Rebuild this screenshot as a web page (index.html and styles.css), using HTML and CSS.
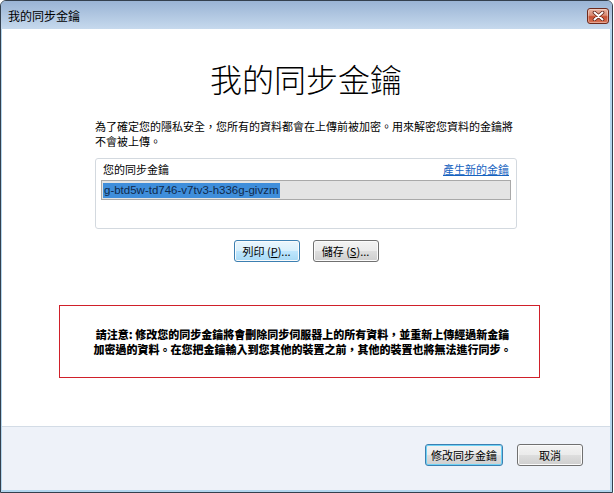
FILE: index.html
```html
<!DOCTYPE html>
<html lang="zh-Hant">
<head>
<meta charset="utf-8">
<title>我的同步金鑰</title>
<link rel="stylesheet" href="styles.css">
</head>
<body>
<div class="window">
  <div class="titlebar">
    <span class="title">我的同步金鑰</span>
    <button class="close" aria-label="關閉"><svg width="13" height="10" viewBox="0 0 13 10"><path d="M2.5 1.5 L10.5 8.5 M10.5 1.5 L2.5 8.5" stroke="#5e2014" stroke-width="3.6" stroke-linecap="round"/><path d="M2.5 1.5 L10.5 8.5 M10.5 1.5 L2.5 8.5" stroke="#fff" stroke-width="2" stroke-linecap="round"/></svg></button>
  </div>
  <div class="client">
    <main class="content">
      <h1 class="heading">我的同步金鑰</h1>
      <div class="column">
        <p class="intro">為了確定您的隱私安全，您所有的資料都會在上傳前被加密。用來解密您資料的金鑰將<br>不會被上傳。</p>
        <section class="keybox">
          <div class="keybox-head"><span>您的同步金鑰</span><a href="#" class="link">產生新的金鑰</a></div>
          <div class="keyfield"><span class="sel">g-btd5w-td746-v7tv3-h336g-givzm</span></div>
        </section>
      </div>
      <div class="actions">
        <button class="btn btn-hover">列印 (<u>P</u>)...</button>
        <button class="btn">儲存 (<u>S</u>)...</button>
      </div>
      <div class="warning">
        <p>請注意: 修改您的同步金鑰將會刪除同步伺服器上的所有資料，並重新上傳經過新金鑰<br>加密過的資料。在您把金鑰輸入到您其他的裝置之前，其他的裝置也將無法進行同步。</p>
      </div>
    </main>
    <footer class="footer">
      <button class="btn btn-default">修改同步金鑰</button>
      <button class="btn">取消</button>
    </footer>
  </div>
</div>
</body>
</html>
```

FILE: styles.css
```css
* { box-sizing: border-box; }
html, body { margin: 0; padding: 0; background: #ffffff; }
body {
  font-family: "Noto Sans CJK TC", "Noto Sans CJK SC", sans-serif;
  font-size: 11px;
  color: #000;
}
.window {
  width: 613px;
  height: 493px;
  display: flex;
  flex-direction: column;
  border: 1px solid #34404e;
  border-radius: 6px 6px 0 0;
  background: #b3d6ee;
  overflow: hidden;
}
.titlebar {
  flex: none;
  height: 28px;
  display: flex;
  align-items: center;
  justify-content: space-between;
  padding: 0 3px 0 7px;
  background: linear-gradient(#9ab4d5, #c6d9ed);
}
.title { font-size: 12px; line-height: 14px; margin-top: 2px; }
.close {
  width: 22px;
  height: 16px;
  padding: 0;
  margin-top: 2px;
  display: flex;
  align-items: center;
  justify-content: center;
  border: 1px solid #6e2a1c;
  border-radius: 3px;
  background: linear-gradient(#eab4a2 0%, #d98a72 45%, #c84f30 55%, #d8765a 100%);
  box-shadow: inset 0 0 0 1px rgba(255,255,255,0.35);
}
.client {
  flex: 1;
  display: flex;
  flex-direction: column;
  margin: 0 2px 2px 1px;
  background: #fff;
}
.content {
  flex: 1;
  padding-top: 29px;
}
.heading {
  margin: 0;
  text-align: center;
  font-size: 32px;
  line-height: 40px;
  font-weight: 300;
}
.column {
  width: 422px;
  margin-left: 93px;
}
.intro {
  margin: 21px 0 0;
  line-height: 15px;
  white-space: nowrap;
}
.keybox {
  margin-top: 9px;
  height: 71px;
  border: 1px solid #d3d9df;
  border-radius: 3px;
  padding: 3px 5px 0 5px;
}
.keybox-head {
  display: flex;
  justify-content: space-between;
  line-height: 15px;
  padding: 0 2px 0 2px;
}
.link { color: #1562c0; text-decoration: underline; }
.keyfield {
  margin-top: 3px;
  height: 20px;
  border: 1px solid #a9a9a9;
  background: #e4e4e4;
  padding: 0 1px;
  display: flex;
  align-items: center;
  font-family: "Liberation Sans", "DejaVu Sans", sans-serif;
  font-size: 11.5px;
}
.sel {
  background: #3f8edb;
  color: #102a4c;
  line-height: 15px;
  padding: 0 1px;
}
.actions {
  margin-top: 11px;
  display: flex;
  justify-content: center;
  gap: 13px;
}
.btn {
  width: 66px;
  height: 22px;
  padding: 0;
  font-family: "Noto Sans CJK TC", "Noto Sans CJK SC", sans-serif;
  font-size: 11px;
  color: #000;
  border: 1px solid #707070;
  border-radius: 3px;
  background: linear-gradient(#f3f3f3 0%, #ebebeb 48%, #dddddd 52%, #cfcfcf 100%);
  box-shadow: inset 0 0 0 1px #fbfbfb;
}
.btn u { text-decoration: underline; }
.btn-hover {
  border-color: #3c7fb1;
  background: linear-gradient(#eaf6fd 0%, #d9f0fc 48%, #bee6fd 52%, #a7d9f5 100%);
}
.btn-default {
  width: 78px;
  border-color: #3c7fb1;
  box-shadow: inset 0 0 0 1px #6fd3f6;
}
.warning {
  margin: 43px 0 0 57px;
  width: 481px;
  height: 73px;
  border: 1px solid #d0202a;
  display: flex;
  align-items: center;
  justify-content: center;
}
.warning p {
  margin: 0 0 0 6px;
  font-weight: 900;
  line-height: 15px;
  text-align: center;
  white-space: nowrap;
}
.footer {
  flex: none;
  height: 64px;
  border-top: 1px solid #d3dce6;
  background: #eef2f9;
  display: flex;
  justify-content: flex-end;
  align-items: flex-start;
  gap: 14px;
  padding: 17px 27px 0 0;
}
```
